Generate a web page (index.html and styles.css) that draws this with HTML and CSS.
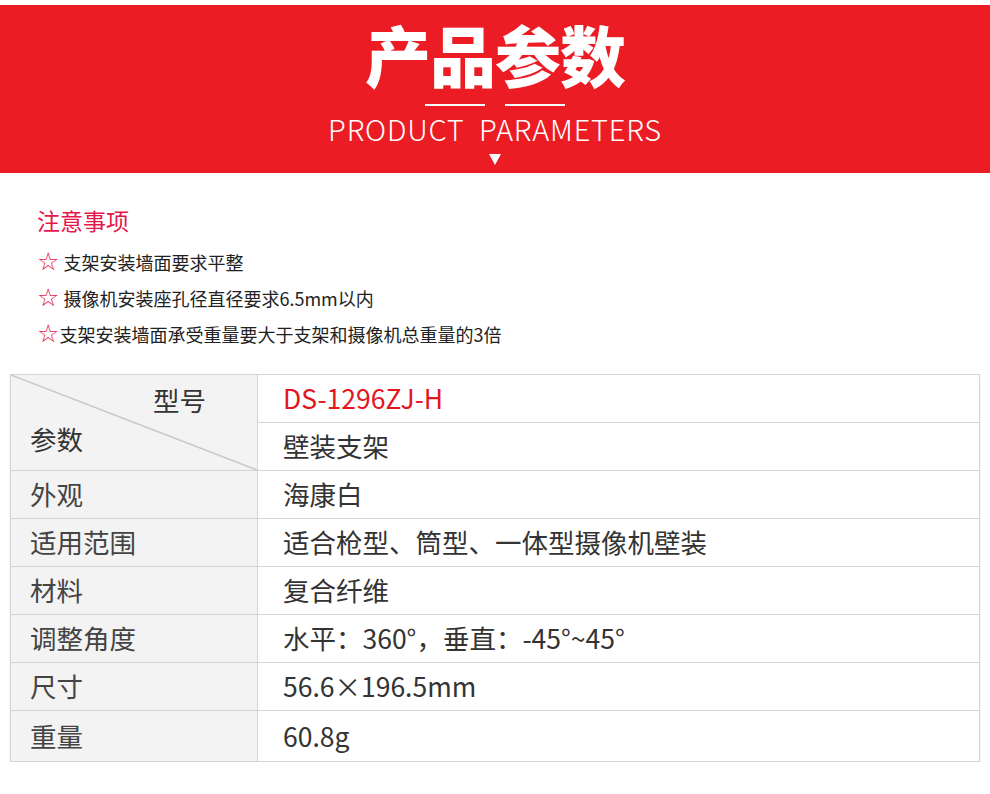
FILE: index.html
```html
<!DOCTYPE html>
<html lang="zh-CN">
<head>
    <meta charset="UTF-8">
    <meta name="viewport" content="width=device-width, initial-scale=1.0">
    <title>产品参数</title>
    <link rel="stylesheet" href="styles.css">
</head>
<body>

    <div class="banner">
        <h1 class="banner-title">产品参数</h1>
        <div class="banner-lines">
            <span></span>
            <span></span>
        </div>
        <p class="banner-sub">PRODUCT&nbsp; PARAMETERS</p>
        <div class="banner-arrow"></div>
    </div>

    <div class="notes">
        <h2 class="notes-title">注意事项</h2>
        <p class="note"><span class="star">☆</span> 支架安装墙面要求平整</p>
        <p class="note"><span class="star">☆</span> 摄像机安装座孔径直径要求6.5mm以内</p>
        <p class="note"><span class="star">☆</span>支架安装墙面承受重量要大于支架和摄像机总重量的3倍</p>
    </div>

    <table class="params">
        <tr>
            <td class="head-cell" rowspan="2">
                <svg class="diag" viewBox="0 0 100 100" preserveAspectRatio="none">
                    <line x1="0" y1="0" x2="100" y2="100" stroke="#c8c8c8" stroke-width="1.5" vector-effect="non-scaling-stroke"/>
                </svg>
                <span class="head-top">型号</span>
                <span class="head-bottom">参数</span>
            </td>
            <td class="model">DS-1296ZJ-H</td>
        </tr>
        <tr><td>壁装支架</td></tr>
        <tr><th>外观</th><td>海康白</td></tr>
        <tr><th>适用范围</th><td>适合枪型、筒型、一体型摄像机壁装</td></tr>
        <tr><th>材料</th><td>复合纤维</td></tr>
        <tr><th>调整角度</th><td>水平：360°，垂直：-45°~45°</td></tr>
        <tr><th>尺寸</th><td>56.6×196.5mm</td></tr>
        <tr class="last"><th>重量</th><td>60.8g</td></tr>
    </table>

</body>
</html>
```

FILE: styles.css
```css
* {
    margin: 0;
    padding: 0;
    box-sizing: border-box;
}

body {
    font-family: "Noto Sans CJK SC", "Noto Sans", sans-serif;
    background: #fff;
    color: #333;
    width: 990px;
    padding-top: 5px;
}

.banner {
    background-color: #ec1c24;
    height: 168px;
    display: flex;
    flex-direction: column;
    align-items: center;
    color: #fff;
}

.banner-title {
    font-size: 66px;
    font-weight: 900;
    line-height: 1;
    margin-top: 15px;
    letter-spacing: -1px;
}

.banner-lines {
    display: flex;
    gap: 20px;
    margin-top: 18px;
}

.banner-lines span {
    display: block;
    width: 60px;
    height: 2px;
    background: #fff;
}

.banner-sub {
    font-family: "Noto Sans CJK SC", sans-serif;
    font-weight: 300;
    font-size: 29px;
    line-height: 1;
    margin-top: 8px;
    letter-spacing: 0.8px;
}

.banner-arrow {
    width: 0;
    height: 0;
    border-left: 6px solid transparent;
    border-right: 6px solid transparent;
    border-top: 11px solid #fff;
    margin-top: 11px;
}

.notes {
    padding: 36px 0 0 37px;
}

.notes-title {
    font-size: 23px;
    font-weight: 400;
    color: #e5174b;
    line-height: 1;
    margin-bottom: 12px;
}

.note {
    font-size: 18px;
    line-height: 36px;
    color: #222;
}

.star {
    color: #e5174b;
    font-size: 25px;
    line-height: 1;
    font-family: "DejaVu Sans", sans-serif;
}

.params {
    margin: 22px 0 0 10px;
    width: 970px;
    border-collapse: collapse;
    font-size: 26.5px;
    box-shadow: 0 1px 2px rgba(0, 0, 0, 0.1);
}

.params td,
.params th {
    border: 1px solid #d4d4d4;
    height: 48px;
    padding: 0 0 0 25px;
    text-align: left;
    font-weight: 400;
    line-height: 1;
}

.params th {
    width: 247px;
    background: #f3f3f3;
    color: #444;
    padding-left: 19px;
}

.params td {
    color: #333;
}

.params .model {
    color: #e3151f;
}

.params .last th,
.params .last td {
    height: 51px;
}

.head-cell {
    position: relative;
    width: 247px;
    background: #f3f3f3;
    color: #444;
}

.params .head-cell {
    padding: 0;
}

.diag {
    position: absolute;
    left: 0;
    top: 0;
    width: 100%;
    height: 100%;
}

.head-top {
    position: absolute;
    left: 142px;
    top: 12px;
}

.head-bottom {
    position: absolute;
    left: 19px;
    top: 51px;
}
```
